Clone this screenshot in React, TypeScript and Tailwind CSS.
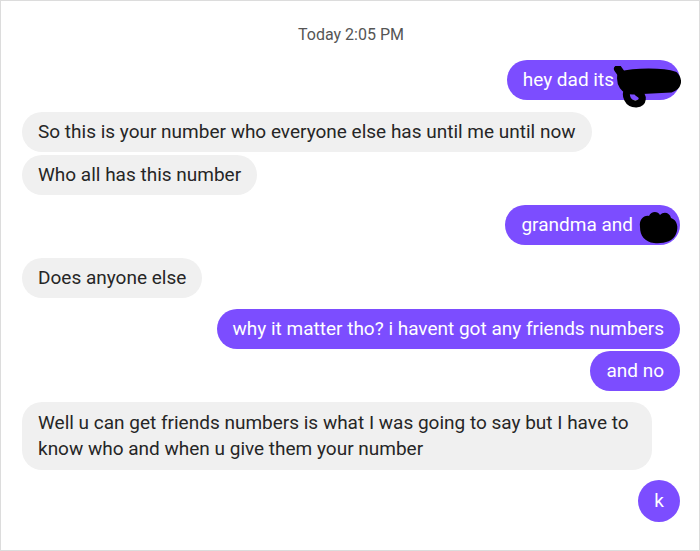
import type { ReactNode } from 'react'

const font = { fontFamily: 'Roboto, "Liberation Sans", sans-serif' }

function Left({ children, className = '' }: { children: ReactNode; className?: string }) {
  return (
    <div className={`flex justify-start ${className}`}>
      <div className="max-w-[630px] rounded-[20px] bg-[#f0f0f0] px-4 py-[7px] text-[19px] leading-[26px] text-[#262626]">
        {children}
      </div>
    </div>
  )
}

function Right({ children, className = '' }: { children: ReactNode; className?: string }) {
  return (
    <div className={`flex justify-end ${className}`}>
      <div className="relative rounded-[20px] bg-[#7c4dff] px-4 py-[7px] text-[19px] leading-[26px] text-white">
        {children}
      </div>
    </div>
  )
}

export default function App() {
  return (
    <div
      className="h-[551px] w-[700px] overflow-hidden border border-[#dcdcdc] bg-white pl-[21px] pr-[19px]"
      style={font}
    >
      {/* timestamp */}
      <div className="pt-[24px] text-center text-[16px] leading-[20px] text-[#555]">Today 2:05 PM</div>

      <Right className="mt-[15px]">
        <span>hey dad its</span>
        <span className="inline-block w-[50px]" />
        {/* scribbled-out name */}
        <svg className="absolute left-[106px] top-[6px]" width="68" height="42" viewBox="0 0 68 42">
          <path d="M5 3 L15 17" stroke="#000" strokeWidth="8" strokeLinecap="round" />
          <path
            d="M7 8 C22 4 50 4 62 8 C68 14 66 22 58 24 L20 26 C10 26 5 18 7 8 Z"
            fill="#000"
            stroke="#000"
            strokeWidth="5"
            strokeLinejoin="round"
          />
          <path
            d="M15 22 C11 30 15 38 23 38 C31 37 31 30 25 27"
            fill="none"
            stroke="#000"
            strokeWidth="7"
            strokeLinecap="round"
          />
        </svg>
      </Right>

      <Left className="mt-[12px]">So this is your number who everyone else has until me until now</Left>
      <Left className="mt-[3px]">Who all has this number</Left>

      <Right className="mt-[10px]">
        <span>grandma and</span>
        <span className="inline-block w-[31px]" />
        <svg className="absolute left-[131px] top-[4px]" width="44" height="36" viewBox="0 0 44 36">
          <path
            d="M4 18 C3 10 8 6 13 7 C15 2 22 2 24 6 C28 2 34 4 35 9 C41 11 43 18 40 25 C37 33 26 35 18 34 C9 33 4 27 4 18 Z"
            fill="#000"
          />
        </svg>
      </Right>

      <Left className="mt-[13px]">Does anyone else</Left>

      <Right className="mt-[11px]">why it matter tho? i havent got any friends numbers</Right>
      <Right className="mt-[2px]">and no</Right>

      <Left className="mt-[11px]">
        <div className="py-[1px]">
          Well u can get friends numbers is what I was going to say but I have to know who and when u give them your
          number
        </div>
      </Left>

      <div className="mt-[10px] flex justify-end">
        <div className="flex h-[42px] w-[42px] items-center justify-center rounded-full bg-[#7c4dff] text-[19px] text-white">
          k
        </div>
      </div>
    </div>
  )
}
